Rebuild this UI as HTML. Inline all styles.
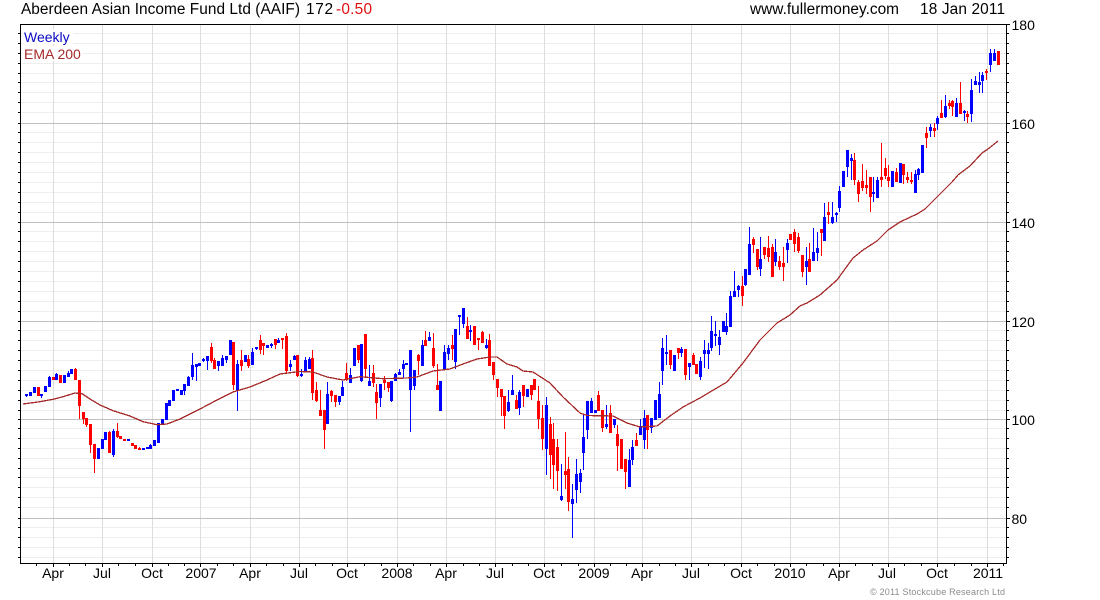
<!DOCTYPE html>
<html><head><meta charset="utf-8"><title>AAIF</title>
<style>
html,body{margin:0;padding:0;background:#fff;width:1100px;height:600px;overflow:hidden}
svg{display:block}
text{font-family:"Liberation Sans",Arial,sans-serif;fill:#000}
.t{font-size:15.4px}
.a{font-size:14px}
</style></head><body>
<svg width="1100" height="600" viewBox="0 0 1100 600" xmlns="http://www.w3.org/2000/svg">
<rect width="1100" height="600" fill="#fff"/>
<g shape-rendering="crispEdges">
<path fill="none" stroke="#eee" d="M21 33.5H1006M21 43.5H1006M21 53.5H1006M21 63.5H1006M21 73.5H1006M21 82.5H1006M21 92.5H1006M21 102.5H1006M21 112.5H1006M21 132.5H1006M21 142.5H1006M21 152.5H1006M21 162.5H1006M21 172.5H1006M21 182.5H1006M21 192.5H1006M21 202.5H1006M21 212.5H1006M21 231.5H1006M21 241.5H1006M21 251.5H1006M21 261.5H1006M21 271.5H1006M21 281.5H1006M21 291.5H1006M21 301.5H1006M21 311.5H1006M21 330.5H1006M21 340.5H1006M21 350.5H1006M21 360.5H1006M21 370.5H1006M21 380.5H1006M21 390.5H1006M21 400.5H1006M21 410.5H1006M21 428.5H1006M21 438.5H1006M21 448.5H1006M21 458.5H1006M21 468.5H1006M21 477.5H1006M21 487.5H1006M21 497.5H1006M21 507.5H1006M21 527.5H1006M21 537.5H1006M21 547.5H1006M21 557.5H1006"/>
<path fill="none" stroke="#ddd" d="M53.5 25V563M102.5 25V563M152.5 25V563M200.5 25V563M250.5 25V563M299.5 25V563M347.5 25V563M397.5 25V563M446.5 25V563M495.5 25V563M544.5 25V563M594.5 25V563M642.5 25V563M691.5 25V563M741.5 25V563M790.5 25V563M839.5 25V563M888.5 25V563M937.5 25V563M987.5 25V563"/>
<path fill="none" stroke="#c0c0c0" d="M21 123.5H1006M21 222.5H1006M21 321.5H1006M21 419.5H1006M21 518.5H1006"/>
<rect x="23" y="29" width="50" height="15" fill="#fff"/>
<rect x="23" y="46" width="60" height="15" fill="#fff"/>

<!-- blue wicks -->
<path fill="none" stroke="#00f" d="M26.5 394V397M41.5 394V398M49.5 376V387M56.5 373V380M68.5 371V377M113.5 429V457M150.5 444V449M184.5 384V395M188.5 376V386M192.5 353V380M196.5 364V381M203.5 358V362M207.5 356V370M218.5 361V371M222.5 355V366M226.5 356V363M237.5 360V411M252.5 348V365M256.5 347V350M271.5 343V348M278.5 338V343M290.5 360V371M294.5 355V360M301.5 369V377M305.5 357V372M309.5 357V369M327.5 382V424M339.5 396V405M342.5 381V396M350.5 368V383M361.5 344V382M369.5 365V386M380.5 384V407M391.5 381V402M395.5 373V381M399.5 369V375M403.5 360V378M410.5 350V432M414.5 370V390M422.5 340V366M429.5 332V341M444.5 345V370M448.5 345V360M455.5 329V369M459.5 315V335M463.5 308V328M470.5 325V341M486.5 339V349M508.5 390V412M512.5 375V395M519.5 390V415M546.5 397V475M561.5 464V501M572.5 484V538M576.5 459V503M580.5 469V493M583.5 415V470M587.5 401V439M591.5 398V413M606.5 405V429M614.5 419V428M629.5 449V487M632.5 440V465M640.5 419V435M644.5 410V449M651.5 418V433M659.5 382V418M662.5 338V385M666.5 335V365M681.5 347V357M689.5 363V380M700.5 357V380M704.5 340V368M708.5 343V369M711.5 316V351M715.5 321V346M719.5 330V355M726.5 313V335M730.5 291V327M734.5 271V297M738.5 285V297M745.5 269V286M749.5 227V275M760.5 237V276M775.5 239V266M787.5 239V263M806.5 247V285M813.5 228V261M817.5 232V261M824.5 203V241M832.5 202V224M836.5 212V222M839.5 186V212M847.5 150V177M851.5 154V180M873.5 177V202M877.5 177V198M915.5 170V193M918.5 168V180M930.5 124V137M937.5 116V130M945.5 95V118M956.5 98V117M964.5 110V121M971.5 79V122M975.5 76V85M979.5 72V93M982.5 72V93M990.5 49V72M994.5 49V61"/>
<!-- blue bodies -->
<path fill="none" stroke="#00f" stroke-width="3.4" d="M26.5 394V396M30.5 392V396M34.5 387V393M41.5 394V396M45.5 386V392M49.5 377V387M56.5 374V380M64.5 375V383M68.5 373V377M71.5 369V374M98.5 448V459M102.5 439V449M105.5 432V440M113.5 431V455M128.5 439V441M143.5 448V450M147.5 447V449M150.5 445V449M154.5 440V446M158.5 423V443M162.5 419V424M166.5 403V420M169.5 400V406M173.5 390V401M177.5 389V391M181.5 390V395M184.5 384V391M188.5 377V386M192.5 365V377M196.5 364V367M199.5 363V366M203.5 359V361M207.5 356V361M218.5 361V366M222.5 358V366M226.5 356V360M230.5 340V355M237.5 364V391M245.5 355V362M252.5 352V365M256.5 347V349M267.5 345V348M271.5 344V346M278.5 340V343M290.5 364V367M294.5 356V360M301.5 374V376M305.5 360V371M309.5 359V369M327.5 394V424M339.5 396V402M342.5 387V396M350.5 375V383M354.5 348V366M361.5 344V381M369.5 381V386M380.5 384V398M391.5 381V401M395.5 374V381M399.5 372V375M403.5 364V369M406.5 363V365M410.5 350V390M414.5 370V386M422.5 345V366M429.5 337V341M440.5 381V411M444.5 352V370M448.5 348V354M455.5 329V362M459.5 315V317M463.5 308V324M470.5 330V332M486.5 345V348M508.5 402V411M512.5 390V395M519.5 392V408M527.5 389V397M546.5 405V449M561.5 496V500M572.5 499V504M576.5 474V490M580.5 473V482M583.5 437V453M587.5 401V430M591.5 401V413M595.5 410V413M606.5 424V427M614.5 419V425M629.5 460V487M632.5 447V460M640.5 426V435M644.5 418V440M651.5 418V428M655.5 400V420M659.5 394V418M662.5 348V371M666.5 352V354M674.5 355V371M681.5 349V353M689.5 363V367M700.5 361V377M704.5 350V354M708.5 350V354M711.5 331V348M715.5 334V336M719.5 337V345M723.5 321V332M726.5 326V332M730.5 296V327M734.5 291V297M738.5 286V290M745.5 269V285M749.5 244V275M760.5 259V269M775.5 252V262M787.5 243V250M806.5 261V267M813.5 252V261M817.5 248V253M824.5 217V241M832.5 217V223M836.5 213V215M839.5 191V208M843.5 171V187M847.5 150V167M851.5 158V161M873.5 192V194M877.5 180V198M892.5 171V187M900.5 163V183M915.5 174V193M918.5 169V175M922.5 145V173M930.5 127V131M937.5 118V124M945.5 106V117M956.5 103V117M964.5 111V113M971.5 90V114M975.5 81V85M979.5 82V85M982.5 75V81M990.5 53V65M994.5 53V61"/>
<!-- red wicks -->
<path fill="none" stroke="#f00" d="M75.5 368V380M79.5 380V419M83.5 412V424M86.5 418V427M90.5 424V453M94.5 444V473M109.5 431V453M117.5 423V438M139.5 447V450M211.5 343V363M214.5 358V369M233.5 342V390M241.5 350V371M248.5 355V368M260.5 335V354M263.5 343V355M275.5 339V349M282.5 338V349M286.5 333V374M297.5 355V377M312.5 350V400M316.5 382V402M320.5 390V416M324.5 410V449M331.5 390V402M335.5 395V407M346.5 363V381M358.5 345V363M365.5 334V378M373.5 365V387M376.5 384V419M384.5 376V390M388.5 382V392M418.5 354V375M425.5 331V346M433.5 333V368M437.5 364V390M452.5 335V360M467.5 317V339M478.5 338V350M482.5 331V343M489.5 334V366M493.5 362V380M497.5 379V397M501.5 389V416M504.5 396V429M516.5 395V409M523.5 385V407M531.5 385V400M538.5 386V429M542.5 405V450M550.5 417V479M553.5 423V489M557.5 439V491M565.5 432V489M568.5 457V511M598.5 391V411M602.5 410V432M610.5 405V433M617.5 425V471M625.5 459V489M636.5 433V446M647.5 415V449M670.5 350V369M678.5 348V359M685.5 349V380M693.5 353V365M742.5 276V306M753.5 237V253M757.5 249V270M764.5 247V259M768.5 236V262M772.5 244V277M779.5 256V270M783.5 247V281M794.5 229V252M798.5 233V253M802.5 255V277M809.5 243V272M821.5 229V256M828.5 202V224M854.5 153V185M858.5 180V202M862.5 164V191M866.5 170V194M870.5 177V212M881.5 143V187M885.5 158V179M888.5 165V187M896.5 168V182M903.5 164V184M907.5 172V183M911.5 172V184M926.5 127V148M934.5 123V137M941.5 100V118M949.5 100V109M952.5 100V116M960.5 82V114M967.5 111V123M986.5 69V80"/>
<!-- red bodies -->
<path fill="none" stroke="#f00" stroke-width="3.4" d="M38.5 387V396M53.5 377V380M60.5 375V383M75.5 369V380M79.5 380V406M83.5 412V419M86.5 418V425M90.5 424V445M94.5 444V459M109.5 432V453M117.5 431V437M120.5 436V439M124.5 439V441M132.5 443V446M135.5 445V449M139.5 448V450M211.5 347V361M214.5 360V369M233.5 342V385M241.5 360V366M248.5 359V366M260.5 340V350M263.5 343V346M275.5 339V345M282.5 338V340M286.5 336V371M297.5 355V376M312.5 358V393M316.5 390V401M320.5 410V416M324.5 410V430M331.5 391V396M335.5 395V402M346.5 373V380M358.5 345V360M365.5 334V369M373.5 373V383M376.5 392V403M384.5 380V383M388.5 382V388M418.5 355V361M425.5 340V346M433.5 348V366M437.5 385V390M452.5 345V349M467.5 326V339M474.5 326V345M478.5 338V340M482.5 332V343M489.5 340V366M493.5 362V375M497.5 379V388M501.5 389V397M504.5 396V416M516.5 400V409M523.5 385V396M531.5 385V395M534.5 379V390M538.5 401V419M542.5 418V439M550.5 424V455M553.5 439V465M557.5 447V471M565.5 471V475M568.5 469V502M598.5 395V411M602.5 410V428M610.5 413V433M617.5 434V446M621.5 439V469M625.5 459V472M636.5 440V446M647.5 415V430M670.5 350V365M678.5 348V353M685.5 349V375M693.5 355V365M696.5 364V374M742.5 286V296M753.5 239V245M757.5 249V267M764.5 247V255M768.5 248V257M772.5 247V277M779.5 261V267M783.5 263V267M790.5 234V240M794.5 232V244M798.5 237V251M802.5 255V272M809.5 259V272M821.5 229V233M828.5 212V215M854.5 160V180M858.5 182V194M862.5 181V188M866.5 185V188M870.5 177V197M881.5 177V180M885.5 168V176M888.5 177V181M896.5 172V182M903.5 164V175M907.5 177V180M911.5 180V182M926.5 133V138M934.5 128V131M941.5 113V118M949.5 103V106M952.5 101V107M960.5 103V114M967.5 114V117M986.5 71V73M998.5 51V65"/>
<!-- EMA -->
<polyline fill="none" stroke="#a52a2a" stroke-width="1.3" points="23,404 40,401.7 53,399.3 62,397 75,393 82,393.7 90,399 100,405 113,410.7 130,416 143,421.7 157,424.7 167,424 180,419 200,409 217,400 233,392 250,387 267,380 280,374 300,371.5 313,372 327,377 343,380 360,376.7 383,378.7 407,378 417,377 433,371 450,369 463,364 477,359 490,357 497,357 507,364 517,367 523,371 533,372 550,383 563,397 580,413 587,415.5 613,416 627,423 640,427 657,426 670,416 683,407 700,398 710,392 727,382 743,363 760,340 777,323 790,315 800,306 807,303 820,295 837,280 853,258 863,250 877,241 888,230 900,222 917,214 925,209 937,197 952,182 958,175 970,166 982,153 988,149 998,141"/>
<!-- frame -->
<path fill="none" stroke="#000" d="M20.5 24.5H1006.5V563.5H20.5Z"/>
<!-- ticks -->
<path fill="none" stroke="#000" d="M18 33.5H20M18 43.5H20M18 53.5H20M18 63.5H20M18 73.5H20M18 82.5H20M18 92.5H20M18 102.5H20M18 112.5H20M18 123.5H20M18 132.5H20M18 142.5H20M18 152.5H20M18 162.5H20M18 172.5H20M18 182.5H20M18 192.5H20M18 202.5H20M18 212.5H20M18 222.5H20M18 231.5H20M18 241.5H20M18 251.5H20M18 261.5H20M18 271.5H20M18 281.5H20M18 291.5H20M18 301.5H20M18 311.5H20M18 321.5H20M18 330.5H20M18 340.5H20M18 350.5H20M18 360.5H20M18 370.5H20M18 380.5H20M18 390.5H20M18 400.5H20M18 410.5H20M18 419.5H20M18 428.5H20M18 438.5H20M18 448.5H20M18 458.5H20M18 468.5H20M18 477.5H20M18 487.5H20M18 497.5H20M18 507.5H20M18 518.5H20M18 527.5H20M18 537.5H20M18 547.5H20M18 557.5H20"/>
<path fill="none" stroke="#000" d="M1007 24.5H1010M1007 33.5H1009M1007 43.5H1009M1007 53.5H1009M1007 63.5H1009M1007 73.5H1009M1007 82.5H1009M1007 92.5H1009M1007 102.5H1009M1007 112.5H1009M1007 123.5H1010M1007 132.5H1009M1007 142.5H1009M1007 152.5H1009M1007 162.5H1009M1007 172.5H1009M1007 182.5H1009M1007 192.5H1009M1007 202.5H1009M1007 212.5H1009M1007 222.5H1010M1007 231.5H1009M1007 241.5H1009M1007 251.5H1009M1007 261.5H1009M1007 271.5H1009M1007 281.5H1009M1007 291.5H1009M1007 301.5H1009M1007 311.5H1009M1007 321.5H1010M1007 330.5H1009M1007 340.5H1009M1007 350.5H1009M1007 360.5H1009M1007 370.5H1009M1007 380.5H1009M1007 390.5H1009M1007 400.5H1009M1007 410.5H1009M1007 419.5H1010M1007 428.5H1009M1007 438.5H1009M1007 448.5H1009M1007 458.5H1009M1007 468.5H1009M1007 477.5H1009M1007 487.5H1009M1007 497.5H1009M1007 507.5H1009M1007 518.5H1010M1007 527.5H1009M1007 537.5H1009M1007 547.5H1009M1007 557.5H1009"/>
<path fill="none" stroke="#000" d="M36.5 564V566M69.5 564V566M85.5 564V566M118.5 564V566M135.5 564V566M168.5 564V566M184.5 564V566M217.5 564V566M233.5 564V566M266.5 564V566M283.5 564V566M315.5 564V566M332.5 564V566M364.5 564V566M381.5 564V566M413.5 564V566M430.5 564V566M463.5 564V566M479.5 564V566M512.5 564V566M528.5 564V566M561.5 564V566M578.5 564V566M610.5 564V566M626.5 564V566M659.5 564V566M675.5 564V566M708.5 564V566M724.5 564V566M757.5 564V566M774.5 564V566M806.5 564V566M823.5 564V566M855.5 564V566M872.5 564V566M904.5 564V566M921.5 564V566M954.5 564V566M971.5 564V566M1003.5 564V566"/>
<path fill="none" stroke="#000" d="M53.5 564V567M102.5 564V567M152.5 564V567M200.5 564V567M250.5 564V567M299.5 564V567M347.5 564V567M397.5 564V567M446.5 564V567M495.5 564V567M544.5 564V567M594.5 564V567M642.5 564V567M691.5 564V567M741.5 564V567M790.5 564V567M839.5 564V567M888.5 564V567M937.5 564V567M987.5 564V567"/>
</g>
<!-- header -->
<text class="t" x="21" y="14" textLength="279" lengthAdjust="spacing">Aberdeen Asian Income Fund Ltd (AAIF)</text>
<text class="t" x="306" y="14" textLength="27" lengthAdjust="spacing">172</text>
<text class="t" x="336" y="14" textLength="36" lengthAdjust="spacing" style="fill:#e01010">-0.50</text>
<text class="t" x="750" y="14" textLength="149" lengthAdjust="spacing">www.fullermoney.com</text>
<text class="t" x="920" y="14" textLength="85" lengthAdjust="spacing">18 Jan 2011</text>
<!-- legend -->
<text class="a" x="24" y="42" style="fill:#0a0ac4">Weekly</text>
<text class="a" x="24" y="59" style="fill:#a52a2a">EMA 200</text>
<!-- y axis -->
<text class="a" x="1011.5" y="30">180</text>
<text class="a" x="1011.5" y="129">160</text>
<text class="a" x="1011.5" y="228">140</text>
<text class="a" x="1011.5" y="327">120</text>
<text class="a" x="1011.5" y="425">100</text>
<text class="a" x="1011.5" y="524">80</text>
<!-- x axis -->
<g text-anchor="middle">
<text class="a" x="53" y="578">Apr</text>
<text class="a" x="102" y="578">Jul</text>
<text class="a" x="152" y="578">Oct</text>
<text class="a" x="201" y="578">2007</text>
<text class="a" x="250" y="578">Apr</text>
<text class="a" x="299" y="578">Jul</text>
<text class="a" x="347" y="578">Oct</text>
<text class="a" x="397" y="578">2008</text>
<text class="a" x="446" y="578">Apr</text>
<text class="a" x="495" y="578">Jul</text>
<text class="a" x="544" y="578">Oct</text>
<text class="a" x="594" y="578">2009</text>
<text class="a" x="642" y="578">Apr</text>
<text class="a" x="691" y="578">Jul</text>
<text class="a" x="741" y="578">Oct</text>
<text class="a" x="790" y="578">2010</text>
<text class="a" x="839" y="578">Apr</text>
<text class="a" x="887" y="578">Jul</text>
<text class="a" x="937" y="578">Oct</text>
<text class="a" x="988" y="578">2011</text>
</g>
<text x="870" y="595" textLength="135" lengthAdjust="spacing" style="font-size:9px;fill:#8c8c8c">© 2011 Stockcube Research Ltd</text>
</svg>
</body></html>
